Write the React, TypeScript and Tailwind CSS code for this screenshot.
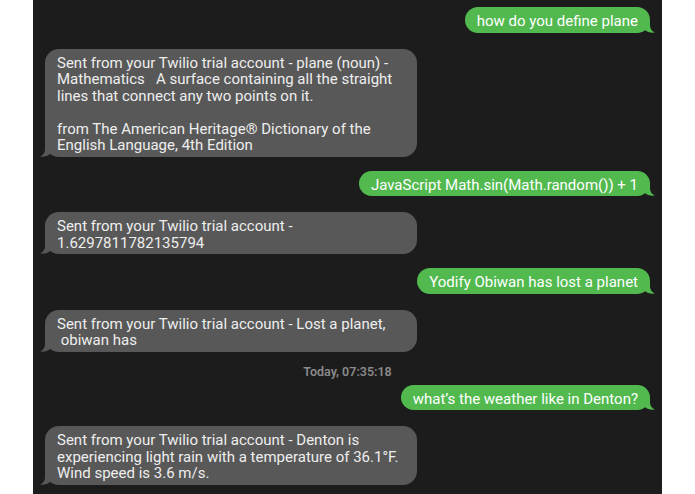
import React from "react";

// one message in the thread, left = received (gray), right = sent (green)
type Msg = { from: "me" | "them"; text: string };

const thread: (Msg | { stamp: string })[] = [
  { from: "me", text: "how do you define plane" },
  {
    from: "them",
    text:
      "Sent from your Twilio trial account - plane (noun) -\nMathematics   A surface containing all the straight\nlines that connect any two points on it.\n\nfrom The American Heritage® Dictionary of the\nEnglish Language, 4th Edition",
  },
  { from: "me", text: "JavaScript Math.sin(Math.random()) + 1" },
  { from: "them", text: "Sent from your Twilio trial account -\n1.6297811782135794" },
  { from: "me", text: "Yodify Obiwan has lost a planet" },
  { from: "them", text: "Sent from your Twilio trial account - Lost a planet,\n obiwan has" },
  { stamp: "Today, 07:35:18" },
  { from: "me", text: "what’s the weather like in Denton?" },
  {
    from: "them",
    text:
      "Sent from your Twilio trial account - Denton is\nexperiencing light rain with a temperature of 36.1°F.\nWind speed is 3.6 m/s.",
  },
];

function Tail({ side, color }: { side: "left" | "right"; color: string }) {
  return (
    <svg
      width="16"
      height="14"
      viewBox="0 0 16 14"
      className={`absolute bottom-0 ${side === "left" ? "-left-[5px]" : "-right-[5px] -scale-x-100"}`}
    >
      <path d="M5 0 V6 C5 9.5 3.5 12 0 13.6 C4 14.2 8 13 10.5 10.5 L16 13 V0 Z" fill={color} />
    </svg>
  );
}

function Bubble({ msg }: { msg: Msg }) {
  const mine = msg.from === "me";
  return (
    <div className={`flex ${mine ? "justify-end" : "justify-start"}`}>
      <div
        className={`relative rounded-[14px] px-3 pt-[6px] pb-[3px] text-[15px] leading-[16.5px] whitespace-pre ${
          mine ? "bg-[#52b94f] text-white" : "w-[372px] bg-[#585858] text-[#eeeeee]"
        }`}
      >
        {msg.text}
        <Tail side={mine ? "right" : "left"} color={mine ? "#52b94f" : "#585858"} />
      </div>
    </div>
  );
}

export default function App() {
  return (
    <div className="flex h-[494px] w-[695px] overflow-hidden bg-white" style={{ fontFamily: "Roboto, 'Liberation Sans', sans-serif" }}>
      <div className="w-[33px]" />
      <div className="flex w-[629px] flex-col bg-[#1c1c1c] px-3 pt-[7px]">
        {thread.map((item, i) =>
          "stamp" in item ? (
            <div key={i} className="mt-[13px] mb-[6px] text-center text-[12.5px] leading-[14px] font-semibold text-[#8a8a8a]">
              {item.stamp}
            </div>
          ) : (
            <div key={i} className={i === 0 ? "" : thread[i - 1] && "stamp" in thread[i - 1] ? "" : item.from === "me" ? "mt-[14px]" : "mt-[16px]"}>
              <Bubble msg={item} />
            </div>
          )
        )}
      </div>
      <div className="flex-1" />
    </div>
  );
}
